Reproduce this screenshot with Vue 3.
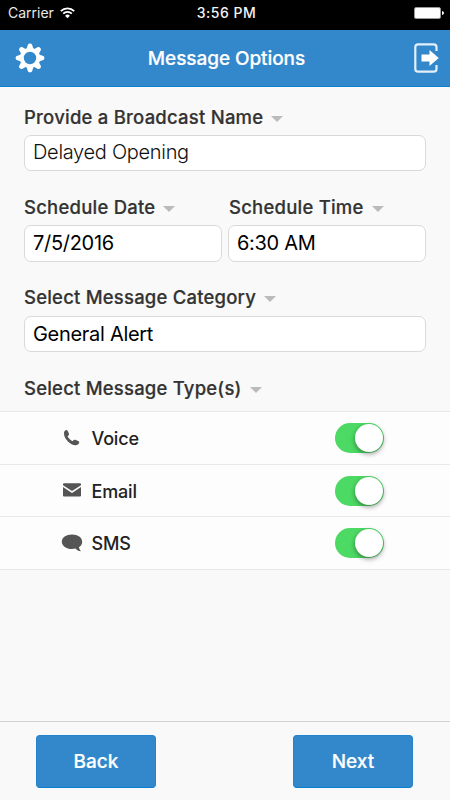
<script setup>
import { reactive } from 'vue'

const types = reactive([
  { id: 'voice', label: 'Voice', on: true },
  { id: 'email', label: 'Email', on: true },
  { id: 'sms', label: 'SMS', on: true },
])
</script>

<template>
  <div class="screen">
    <div class="status">
      <div class="carrier">
        <span>Carrier</span>
        <svg class="wifi" width="15" height="12" viewBox="0 0 15 12" fill="none" stroke="#fff" stroke-width="1.8">
          <path d="M.8 4.1a9.5 9.5 0 0 1 13.4 0" />
          <path d="M3.2 6.7a6.1 6.1 0 0 1 8.6 0" />
          <path d="M7.5 11.3 5.1 8.8a3.4 3.4 0 0 1 4.8 0z" fill="#fff" stroke="none" />
        </svg>
      </div>
      <span class="clock">3:56 PM</span>
      <svg class="battery" width="30" height="12" viewBox="0 0 30 12">
        <rect x=".5" y=".5" width="26" height="11" rx="1.6" fill="#fff" stroke="#999" />
        <path d="M28 4q2 .4 2 2t-2 2z" fill="#fff" />
      </svg>
    </div>

    <header class="bar">
      <svg class="gear" width="30" height="30" viewBox="-15 -15 30 30">
        <circle r="8.2" fill="none" stroke="#fff" stroke-width="4" />
        <g fill="#fff">
          <path
            v-for="n in 8"
            :key="n"
            d="M-3.4-9-2.1-13.3Q-1.6-14.4 0-14.4t2.1 1.1L3.4-9z"
            :transform="`rotate(${n * 45})`"
          />
        </g>
      </svg>
      <h1>Message Options</h1>
      <svg class="exit" width="26" height="30" viewBox="0 0 26 30">
        <path d="M22.5 8V4q0-2.7-2.7-2.7H4Q1.3 1.3 1.3 4v22q0 2.7 2.7 2.7h15.8q2.7 0 2.7-2.7v-4" fill="none" stroke="#e2f0fb" stroke-width="2.2" />
        <path d="M7.5 11.5h8V7l9.3 8-9.3 8v-4.5h-8z" fill="#fff" />
      </svg>
    </header>

    <main class="form">
      <section class="field">
        <label class="name">Provide a Broadcast Name<i class="caret"></i></label>
        <div class="input draft"><span>Delayed Opening</span></div>
      </section>
      <div class="pair">
        <section class="field">
          <label class="date">Schedule Date<i class="caret"></i></label>
          <div class="input day"><span>7/5/2016</span></div>
        </section>
        <section class="field">
          <label class="time">Schedule Time<i class="caret"></i></label>
          <div class="input hour"><span>6:30 AM</span></div>
        </section>
      </div>
      <section class="field">
        <label class="category">Select Message Category<i class="caret"></i></label>
        <div class="input alert"><span>General Alert</span></div>
      </section>
      <label class="kinds">Select Message Type(s)<i class="caret"></i></label>
    </main>

    <ul class="types">
      <li v-for="t in types" :key="t.id" :class="t.id">
        <svg class="icon" width="22" height="20" viewBox="0 0 22 20" fill="#555">
          <path v-if="t.id === 'voice'" d="M3 4.2Q3.5 2.2 5.3 2q1-.1 1.4.9l1.3 2.9q.3.9-.4 1.5L6.5 8.5q1.8 3.1 4.9 4.7l1.400-1.200q.7-.6 1.600-.2l3.200 1.500q.9.500.6 1.500-.7 2.300-3.300 2.500-4.200.2-8-3.700Q2.700 9.300 3 4.200z" />
          <g v-else-if="t.id === 'email'">
            <path d="M2 3.200q0-1 1-1h16q1 0 1 1v1L11 10.100 2 4.200z" />
            <path d="M2 5.900 11 11.900l9-6V14.600q0 1-1 1H3q-1 0-1-1z" />
          </g>
          <path v-else d="M11 1.500c5.800 0 10.200 3.100 10.200 7.200 0 2.300-1.200 4.300-3.300 5.500.3 1.500.9 2.700 2.100 4-2.400 0-4.100-.8-5.400-2.600-1.200.3-2.300.4-3.600.4C5.200 16 .8 12.800.8 8.700S5.200 1.500 11 1.500z" />
        </svg>
        <span class="text">{{ t.label }}</span>
        <button class="toggle" :class="{ on: t.on }" role="switch" :aria-checked="t.on" @click="t.on = !t.on">
          <span class="knob"></span>
        </button>
      </li>
    </ul>

    <footer class="actions">
      <button class="back">Back</button>
      <button class="next">Next</button>
    </footer>
  </div>
</template>

<style>
body {
  margin: 0;
}
</style>

<style scoped>
.screen {
  display: flex;
  flex-direction: column;
  width: 450px;
  height: 800px;
  overflow: hidden;
  box-sizing: border-box;
  background: #f9f9f9;
  color: #333;
  font-family: Inter, "Liberation Sans", sans-serif;
}
.status {
  display: grid;
  grid-template-columns: 1fr auto 1fr;
  align-items: center;
  height: 30px;
  flex: none;
  box-sizing: border-box;
  padding: 0 6px 5px 8px;
  background: #000;
  color: #fff;
  font-size: 14px;
  line-height: 20px;
}
.carrier {
  display: flex;
  align-items: center;
  gap: 6px;
  color: #e8e8e8;
}
.clock {
  margin-left: 1px;
  font-weight: 500;
  font-size: 14px;
  letter-spacing: 0.5px;
  color: #f4f4f4;
}
.battery {
  justify-self: end;
}
.bar {
  display: flex;
  align-items: center;
  justify-content: space-between;
  height: 57px;
  flex: none;
  box-sizing: border-box;
  padding: 0 10px 0 15px;
  border-bottom: 1px solid #0c80d0;
  background: #3387cb;
}
h1 {
  margin: 0 6px 0 0;
  color: #fff;
  font-size: 19px;
  font-weight: 500;
  letter-spacing: -0.08px;
  white-space: nowrap;
  -webkit-text-stroke: 0.2px #fff;
}
.form {
  height: 324px;
  flex: none;
  box-sizing: border-box;
  padding: 17px 24px 0;
}
.field {
  height: 90.5px;
}
.pair {
  display: grid;
  grid-template-columns: 198px 198px;
  gap: 6px;
}
label {
  display: flex;
  align-items: center;
  height: 24px;
  box-sizing: border-box;
  font-size: 18.5px;
  font-weight: 500;
  letter-spacing: 0.22px;
  white-space: nowrap;
  -webkit-text-stroke: 0.2px #333;
}
.name {
  padding-top: 1px;
}
.time {
  padding-left: 1px;
}
.category,
.kinds {
  letter-spacing: 0.2px;
}
.caret {
  margin: 4px 0 0 8px;
  border: 6.5px solid transparent;
  border-top-color: #bbb;
  border-bottom: 0;
}
.input {
  display: flex;
  align-items: center;
  height: 37px;
  box-sizing: border-box;
  margin-top: 6px;
  padding: 0 8px 1px;
  border: 1px solid #d9d9d9;
  border-radius: 7px;
  background: #fff;
  color: #000;
  font-size: 20px;
  letter-spacing: -0.3px;
  white-space: nowrap;
}
.draft,
.alert {
  height: 36px;
  margin-top: 7px;
}
.draft {
  padding-bottom: 2px;
  color: #111;
  font-weight: 300;
}
.types {
  margin: 0;
  padding: 0;
  list-style: none;
  border-top: 1px solid #e8e8e8;
}
.types li {
  display: flex;
  align-items: center;
  height: 52.7px;
  box-sizing: border-box;
  padding: 0 66px 0 61px;
  border-bottom: 1px solid #e8e8e8;
  background: #fdfdfd;
}
.text {
  margin-left: 8.5px;
  padding-top: 1px;
  color: #222;
  font-size: 18px;
  font-weight: 500;
  letter-spacing: -0.15px;
}
.toggle {
  width: 49px;
  height: 30px;
  margin-left: auto;
  padding: 1px;
  border: 0;
  border-radius: 15px;
  background: #ccc;
}
.toggle.on {
  background: #4cd964;
}
.knob {
  display: block;
  width: 28px;
  height: 28px;
  border-radius: 50%;
  background: #fff;
  box-shadow: 0 2px 5px rgba(0, 0, 0, 0.4);
}
.on .knob {
  margin-left: 19px;
}
.actions {
  display: flex;
  justify-content: space-between;
  height: 79px;
  flex: none;
  box-sizing: border-box;
  margin-top: auto;
  padding: 13px 37px 0 36px;
  border-top: 1px solid #d2d2d2;
}
.actions button {
  width: 120px;
  height: 53px;
  padding: 0;
  border: 1px solid #2583cb;
  border-bottom-color: #0880cf;
  border-radius: 4px;
  background: #3387cb;
  color: #fff;
  font-family: inherit;
  font-size: 19px;
  font-weight: 500;
  -webkit-text-stroke: 0.2px #fff;
}
</style>
